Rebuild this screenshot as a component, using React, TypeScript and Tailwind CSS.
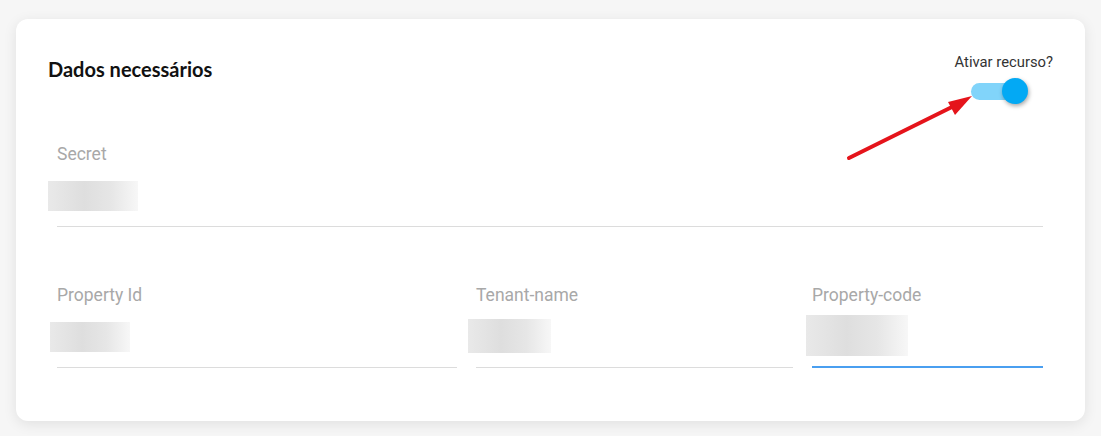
import React from "react";

function Blur({ w, h, ml, mt, dark = "#dedede" }: { w: number; h: number; ml: number; mt: number; dark?: string }) {
  return (
    <div
      style={{
        width: w,
        height: h,
        marginLeft: ml,
        marginTop: mt,
        background: `linear-gradient(90deg, #e9e9e9 0%, ${dark} 40%, #e6e6e6 70%, #f7f7f7 100%)`,
      }}
    />
  );
}

function Field({
  label,
  boxW,
  boxH,
  boxMl,
  boxMt,
  active = false,
}: {
  label: string;
  boxW: number;
  boxH: number;
  boxMl: number;
  boxMt: number;
  active?: boolean;
}) {
  return (
    <div className="flex flex-col">
      <div className="text-[17.5px] leading-[19px] text-[#a8a8a8] font-['Roboto',sans-serif]">{label}</div>
      <div
        className={
          "h-[63px] " +
          (active ? "border-b-2 border-[#4a9ff0]" : "border-b border-[#dcdcdc]")
        }
      >
        <Blur w={boxW} h={boxH} ml={boxMl} mt={boxMt} />
      </div>
    </div>
  );
}

export default function App() {
  return (
    <div className="w-[1101px] h-[436px] bg-[#f6f6f6] pl-[16px] pt-[19px]">
      <div className="relative w-[1069px] h-[402px] bg-white rounded-[12px] shadow-[0_3px_14px_rgba(0,0,0,0.09)] px-[32px] pt-[33px]">
        <div className="flex justify-between items-start">
          <div className="mt-[5px] text-[20px] leading-[24px] font-bold text-[#111] font-['Lato',sans-serif]">
            Dados necessários
          </div>
          <div className="flex flex-col items-end">
            <div className="text-[14.8px] leading-[20px] text-[#333] font-['Roboto',sans-serif]">Ativar recurso?</div>
            <div className="relative mt-[6px] mr-[25px] w-[57px] h-[26px]">
              <div className="absolute left-0 top-[5px] w-[46px] h-[17px] rounded-full bg-[#81d4fa]" />
              <div className="absolute right-0 top-0 w-[26px] h-[26px] rounded-full bg-[#03a9f4] shadow-[1px_2px_4px_rgba(0,0,0,0.35)]" />
            </div>
          </div>
        </div>

        <div className="ml-[9px] mr-[10px] mt-[41px]">
          <Field label="Secret" boxW={90} boxH={30} boxMl={-9} boxMt={17} />
        </div>

        <div className="ml-[9px] mt-[59px] grid grid-cols-[400px_317px_231px] gap-x-[19px]">
          <Field label="Property Id" boxW={80} boxH={30} boxMl={-7} boxMt={17} />
          <Field label="Tenant-name" boxW={83} boxH={34} boxMl={-8} boxMt={14} />
          <Field label="Property-code" boxW={102} boxH={41} boxMl={-6} boxMt={10} active />
        </div>

        <svg
          className="absolute left-0 top-0 pointer-events-none"
          width="1069"
          height="402"
          viewBox="0 0 1069 402"
        >
          <line x1="833" y1="139" x2="942" y2="85" stroke="#e5141b" strokeWidth="4" strokeLinecap="round" />
          <polygon points="956,77 932,83 939,96" fill="#e5141b" />
        </svg>
      </div>
    </div>
  );
}
